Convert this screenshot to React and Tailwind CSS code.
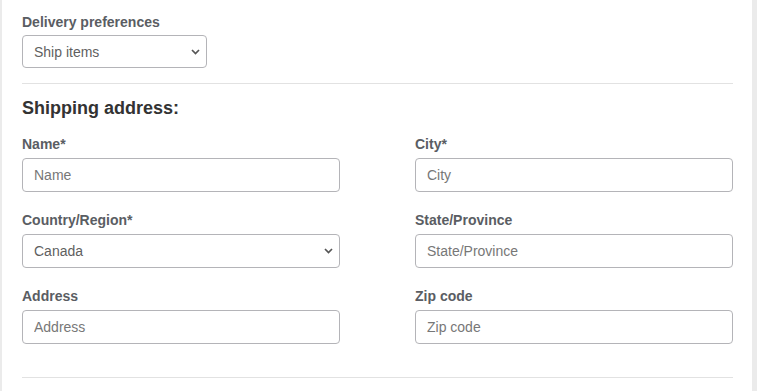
import React from 'react';

const font = { fontFamily: '"Liberation Sans", Arial, sans-serif' };

const Chevron = () => (
  <svg
    className="pointer-events-none absolute right-[7px] top-1/2 -translate-y-1/2"
    width="9"
    height="6"
    viewBox="0 0 9 6"
    fill="none"
  >
    <path d="M1 1l3.5 3.5L8 1" stroke="#555" strokeWidth="1.7" />
  </svg>
);

const Field = ({ label, placeholder, select, value, className = '' }) => (
  <div className={'flex flex-col ' + className}>
    <label className="text-sm leading-5 font-bold text-[#5a5d63] mb-1">{label}</label>
    {select ? (
      <div className="relative">
        <select
          defaultValue={value}
          className="w-full h-[34px] appearance-none rounded border border-[#b4b4b8] bg-white pl-[11px] pr-6 text-sm text-[#5f5f5f] outline-none"
        >
          <option>{value}</option>
        </select>
        <Chevron />
      </div>
    ) : (
      <input
        placeholder={placeholder}
        className="w-full h-[34px] rounded border border-[#b4b4b8] bg-white pl-[11px] pr-3 text-sm text-[#333] placeholder:text-[#777] outline-none"
      />
    )}
  </div>
);

const App = () => {
  return (
    <div
      style={font}
      className="w-[757px] h-[391px] bg-white border-l-2 border-l-[#ebebeb] border-r-[5px] border-r-[#ebebeb] overflow-hidden"
    >
      <div className="pl-5 pr-[19px] pt-3">
        <div className="flex flex-col w-[185px]">
          <label className="text-sm leading-5 font-bold text-[#5a5d63] mb-[3px]">Delivery preferences</label>
          <div className="relative">
            <select
              defaultValue="Ship items"
              className="w-full h-[33px] appearance-none rounded border border-[#b4b4b8] bg-white pl-[11px] pr-6 text-sm text-[#5f5f5f] outline-none"
            >
              <option>Ship items</option>
            </select>
            <Chevron />
          </div>
        </div>

        <hr className="mt-[15px] border-t border-[#e2e2e2]" />

        <h2 className="mt-3 text-lg leading-6 font-bold text-[#333]">Shipping address:</h2>

        <div className="mt-[14px] grid grid-cols-2 gap-x-[75px] gap-y-[18px]">
          <Field label="Name*" placeholder="Name" />
          <Field label="City*" placeholder="City" />
          <Field label="Country/Region*" select value="Canada" />
          <Field label="State/Province" placeholder="State/Province" />
          <Field label="Address" placeholder="Address" />
          <Field label="Zip code" placeholder="Zip code" />
        </div>

        <hr className="mt-[33px] border-t border-[#e2e2e2]" />
      </div>
    </div>
  );
};

export default App;
